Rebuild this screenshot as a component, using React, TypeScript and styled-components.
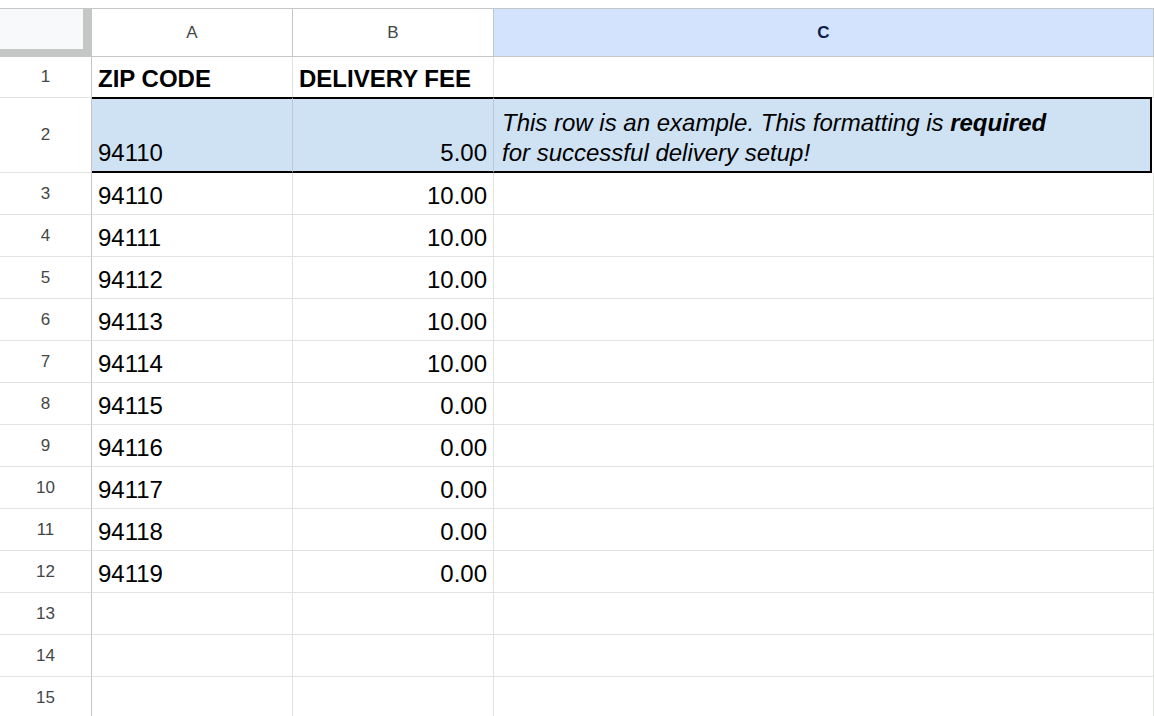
import React from 'react';
import styled, { createGlobalStyle } from 'styled-components';

const Global = createGlobalStyle`
  body { margin: 0; background: #fff; font-family: "Liberation Sans", Arial, sans-serif; overflow: hidden; }
`;

const rows: [string, string][] = [
  ['94110', '10.00'], ['94111', '10.00'], ['94112', '10.00'], ['94113', '10.00'], ['94114', '10.00'],
  ['94115', '0.00'], ['94116', '0.00'], ['94117', '0.00'], ['94118', '0.00'], ['94119', '0.00'],
  ['', ''], ['', ''], ['', ''],
];

const Sheet = styled.div`
  margin-top: 8px;
  border-top: 1px solid #c4c7c5;
  display: grid;
  grid-template-columns: 92px 201px 201px 1fr;
  grid-auto-rows: 42px;
  grid-template-rows: 48px 41px 75px;
  width: 1154px;
`;

const Corner = styled.div`
  background: #f8f9fa;
  border-right: 9px solid #c4c7c5;
  border-bottom: 8px solid #c4c7c5;
`;

const ColHead = styled.div<{ $sel?: boolean }>`
  display: flex;
  align-items: center;
  justify-content: center;
  font-size: 17px;
  color: ${p => (p.$sel ? '#0b1f4b' : '#444746')};
  font-weight: ${p => (p.$sel ? 700 : 400)};
  background: ${p => (p.$sel ? '#d3e3fd' : '#fff')};
  border-right: 1px solid #c4c7c5;
  border-bottom: 1px solid #c4c7c5;
`;

const RowHead = styled.div`
  display: flex;
  align-items: center;
  justify-content: center;
  font-size: 17px;
  color: #444746;
  border-right: 1px solid #c4c7c5;
  border-bottom: 1px solid #e1e3e1;
`;

const Cell = styled.div<{ $right?: boolean; $bold?: boolean; $ex?: boolean; $last?: boolean }>`
  display: flex;
  align-items: flex-end;
  justify-content: ${p => (p.$right ? 'flex-end' : 'flex-start')};
  padding: 0 6px 4px 6px;
  font-size: 24px;
  color: #000;
  font-weight: ${p => (p.$bold ? 700 : 400)};
  border-right: 1px solid #e1e3e1;
  border-bottom: 1px solid #e1e3e1;
  white-space: nowrap;
  overflow: hidden;
  ${p => p.$ex && `
    background: #cfe2f3;
    border-top: 2px solid #000;
    border-bottom: 2px solid #000;
    border-right-color: #b9c9d8;
    margin-top: -1px;
  `}
  ${p => p.$last && `border-right: 2px solid #000; margin-right: 2px;`}
`;

const Note = styled.div`
  font-style: italic;
  font-size: 24px;
  line-height: 30px;
  white-space: nowrap;
`;

export default function App() {
  return (
    <>
      <Global />
      <Sheet>
        <Corner />
        <ColHead>A</ColHead>
        <ColHead>B</ColHead>
        <ColHead $sel>C</ColHead>

        <RowHead>1</RowHead>
        <Cell $bold>ZIP CODE</Cell>
        <Cell $bold style={{ padding: '0 2px 4px 6px' }}>DELIVERY FEE</Cell>
        <Cell />

        <RowHead>2</RowHead>
        <Cell $ex>94110</Cell>
        <Cell $ex $right>5.00</Cell>
        <Cell $ex $last style={{ padding: '0 4px 3px 8px' }}>
          <Note>
            This row is an example. This formatting is <b>required</b>
            <br />
            for successful delivery setup!
          </Note>
        </Cell>

        {rows.map(([zip, fee], i) => (
          <React.Fragment key={i}>
            <RowHead>{i + 3}</RowHead>
            <Cell>{zip}</Cell>
            <Cell $right>{fee}</Cell>
            <Cell />
          </React.Fragment>
        ))}
      </Sheet>
    </>
  );
}
